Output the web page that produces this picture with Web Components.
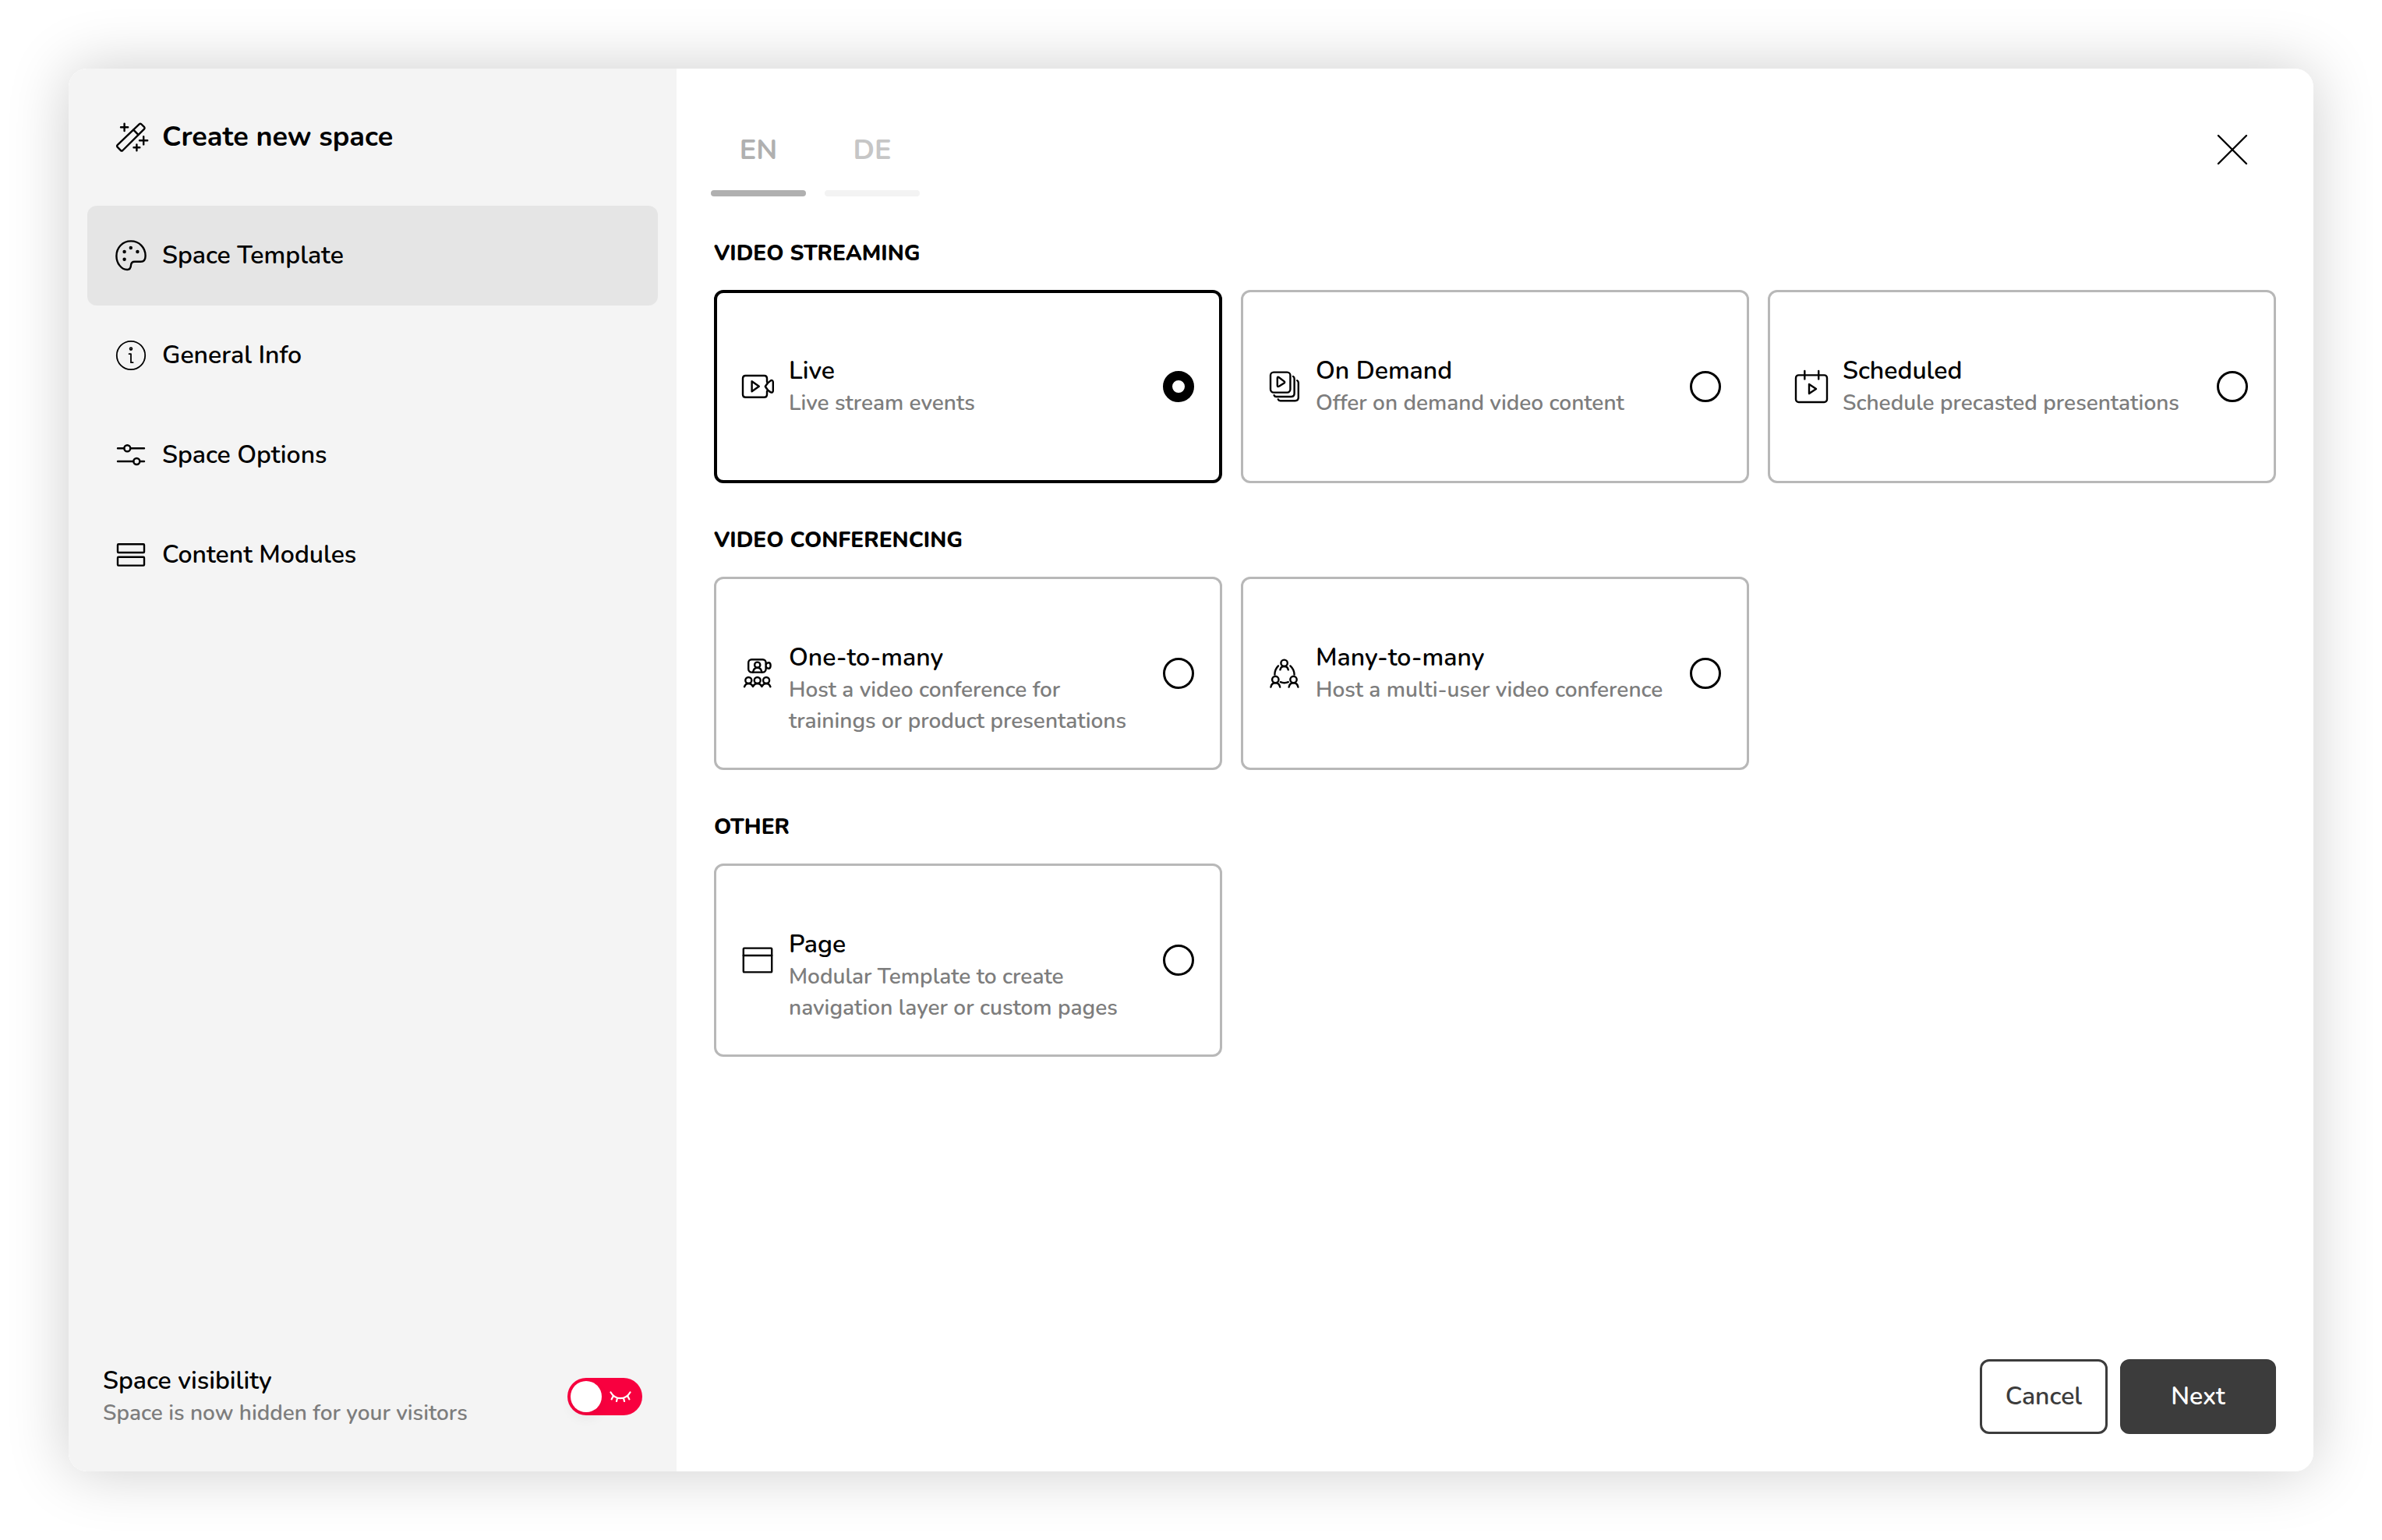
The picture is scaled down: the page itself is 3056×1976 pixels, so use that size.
<!DOCTYPE html>
<html lang="en">
<head>
<meta charset="utf-8">
<title>Create new space</title>
<style>
  html { background: #fff; }
  body { margin: 0; color: #000; font-family: Nunito, "Noto Sans", sans-serif; font-size: 32px; line-height: 40px; }
</style>
</head>
<body>
<space-dialog>
  <dialog-sidebar slot="sidebar" heading="Create new space">
    <nav-item icon="palette" active>Space Template</nav-item>
    <nav-item icon="info">General Info</nav-item>
    <nav-item icon="sliders">Space Options</nav-item>
    <nav-item icon="modules">Content Modules</nav-item>
    <visibility-toggle slot="footer" label="Space visibility" hint="Space is now hidden for your visitors"></visibility-toggle>
  </dialog-sidebar>
  <language-tabs slot="tabs"></language-tabs>
  <template-section heading="VIDEO STREAMING">
    <template-card icon="live" heading="Live" value="live" checked>Live stream events</template-card>
    <template-card icon="demand" heading="On Demand" value="demand">Offer on demand video content</template-card>
    <template-card icon="calendar" heading="Scheduled" value="scheduled">Schedule precasted presentations</template-card>
  </template-section>
  <template-section heading="VIDEO CONFERENCING">
    <template-card icon="onetomany" heading="One-to-many" value="one-to-many">Host a video conference for trainings or product presentations</template-card>
    <template-card icon="manytomany" heading="Many-to-many" value="many-to-many">Host a multi-user video conference</template-card>
  </template-section>
  <template-section heading="OTHER">
    <template-card icon="page" heading="Page" value="page">Modular Template to create navigation layer or custom pages</template-card>
  </template-section>
  <action-button slot="actions">Cancel</action-button>
  <action-button slot="actions" primary>Next</action-button>
</space-dialog>

<script>
const ICONS = {
  wand: '<path d="M30.6 3.4 2.6 30.2Q1.6 31.2 2.4 32.4L7 37.2Q8.2 38 9.4 37L37.2 9.4Q38 8.2 37.2 7.2L33 3Q31.8 2.4 30.6 3.4Z"/><path d="M23.3 10.6 29.4 16.8M11.6 2.6V12M7 7.3H16.2M36.2 19.2V29.4M31 24.3H41.2M27.4 29.4V37.2M23.5 33.3H31.3"/>',
  palette: '<path d="M20 1.4C9 1.4 1.4 10 1.4 20.4 1.4 29.5 7.6 38 15.2 38 18.8 38 19.8 35.6 20 32.4 20.2 29 21.6 27.8 24.8 27.8H32.6C37 27.8 38.6 24.4 38.6 20.2 38.6 9.6 30.6 1.4 20 1.4Z"/><g fill="currentColor" stroke="none"><circle cx="19.8" cy="10" r="2.2"/><circle cx="11.6" cy="15" r="2.2"/><circle cx="28.4" cy="15" r="2.2"/><circle cx="11.6" cy="24.7" r="2.2"/></g>',
  info: '<g stroke-width="1.8"><circle cx="20" cy="20" r="18.2"/><circle cx="20" cy="11.6" r="1.4"/><path d="M17.6 18.2H20V29.2H22.6"/></g>',
  sliders: '<path d="M3 11.3H11.3M19.3 11.3H37M3 28H23.3M31.3 28H37"/><circle cx="15.3" cy="11.3" r="4"/><circle cx="27.3" cy="28" r="4"/>',
  modules: '<rect x="3" y="6.2" width="34" height="10.8" rx="1"/><rect x="3" y="22.8" width="34" height="10.8" rx="1"/>',
  live: '<path d="M32 14V9.5Q32 6 28.5 6H4.5Q1 6 1 9.5V30.3Q1 33.8 4.5 33.8H28.5Q32 33.8 32 30.3V26"/><path d="M12.6 13.2V26.2L21.8 19.7Z"/><path d="M29.8 19.9C31.6 16.6 34.2 13.8 37 12.2 38.6 11.6 39.8 12.6 39.8 14.2V25.4C39.8 27 38.6 28 37 27.4 34.2 26 31.6 23.2 29.8 19.9Z"/>',
  demand: '<rect x="2" y="1.6" width="25.4" height="26" rx="4"/><path d="M10.8 9.2Q10.8 7 12.8 8.2L19.6 13.4Q20.6 14.4 19.6 15.4L12.8 19.8Q10.8 20.8 10.8 18.6ZM31 7Q32.6 7.8 32.6 10V28.8Q32.6 33 28.4 33H9.4Q7.2 33 6.6 31.2M36.2 12.2Q37.8 13 37.8 15.2V34Q37.8 38.2 33.6 38.2H14.6Q12.4 38.2 11.8 36.4"/>',
  calendar: '<rect x="0" y="5.4" width="40" height="34.6" rx="3.6"/><path d="M11.3 0V10.4M29.2 0V10.4M17 17V29L26 23Z"/>',
  onetomany: '<rect x="8.2" y="2.2" width="22.4" height="16.4" rx="4"/><path d="M31 8.2Q32 6.2 34 6.2 36.6 6.2 36.6 10 36.6 13.8 34 13.8 32 13.8 31 11.8"/><circle cx="19.7" cy="9.2" r="3.6"/><path d="M14 18.6C14.6 14.6 17 12.8 19.7 12.8S24.8 14.6 25.4 18.6"/><circle cx="8.3" cy="29" r="4"/><circle cx="19.7" cy="29" r="4"/><circle cx="31.1" cy="29" r="4"/><path d="M3 37.2C4 34.6 6 33 8.3 33S12.8 34.6 14 37C15.2 34.6 17.4 33 19.7 33S24.2 34.6 25.4 37C26.6 34.6 28.8 33 31.1 33S35.4 34.6 36.4 37.2"/>',
  manytomany: '<circle cx="19.6" cy="6.8" r="4.2"/><path d="M14.4 15.4C15 12.6 17 11 19.6 11S24.2 12.6 24.8 15.4M12 10.4Q7.4 15 7.4 21.6M27.4 10.4Q32.4 15 32.6 21.6M14.8 31.2Q19.6 33.2 24.8 31.2"/><circle cx="8.3" cy="28" r="4.2"/><circle cx="31.5" cy="28" r="4.2"/><path d="M2.4 37.6C3 34.4 5.4 32.2 8.3 32.2S13.6 34.4 14.2 37.6M25.6 37.6C26.2 34.4 28.6 32.2 31.5 32.2S36.8 34.4 37.4 37.6"/>',
  page: '<rect x="1.8" y="4.6" width="36.4" height="30.8" rx="1"/><path d="M1.8 14H38.2"/>',
  close: '<path d="M2 2 38 38M38 2 2 38"/>'
};
const icon = name => `<svg class="icon" viewBox="0 0 40 40" width="40" height="40" fill="none" stroke="currentColor" stroke-width="2.4" stroke-linecap="round" stroke-linejoin="round" aria-hidden="true">${ICONS[name]}</svg>`;

class BaseElement extends HTMLElement {
  connectedCallback() {
    if (this.shadowRoot) return;
    this.attachShadow({ mode: 'open' }).innerHTML =
      `<style>*{box-sizing:border-box}.icon{display:block;flex:none;overflow:visible}button,input{font:inherit;color:inherit;margin:0}${this.css()}</style>${this.html()}`;
    this.ready();
  }
  ready() {}
}

customElements.define('space-dialog', class extends BaseElement {
  css() { return `
    :host { display: flex; min-height: 100vh; box-sizing: border-box; padding: 88px; }
    .frame { flex: 1; display: flex; border-radius: 24px; box-shadow: 0 0 80px rgba(0,0,0,.2); }
    .dialog { flex: 1; display: grid; grid-template-columns: 780px minmax(0, 1fr); border-radius: 24px; overflow: hidden; background: #fff; }
    .main { display: flex; flex-direction: column; padding: 48px; }
    header { display: flex; justify-content: space-between; align-items: flex-start; height: 116px; padding-right: 36px; margin-left: -4px; }
    .close { display: flex; align-items: center; height: 112px; padding: 0; border: 0; background: none; cursor: pointer; }
    .content { flex: 1; display: flex; flex-direction: column; gap: 52px; padding-top: 52px; }
    footer { display: flex; justify-content: flex-end; gap: 16px; }`; }
  html() { return `
    <div class="frame"><div class="dialog" role="dialog" aria-label="Create new space">
      <slot name="sidebar"></slot>
      <div class="main">
        <header><slot name="tabs"></slot><button class="close" aria-label="Close">${icon('close')}</button></header>
        <div class="content"><slot></slot></div>
        <footer><slot name="actions"></slot></footer>
      </div>
    </div></div>`; }
  ready() {
    this.addEventListener('template-change', e => {
      this.querySelectorAll('template-card').forEach(c => c.checked = c === e.target);
    });
  }
});

customElements.define('dialog-sidebar', class extends BaseElement {
  css() { return `
    :host { display: flex; flex-direction: column; background: #f4f4f4; padding: 0 24px 48px; }
    h1 { display: flex; align-items: center; gap: 20px; height: 176px; margin: 0; padding: 0 36px; font-size: 36px; line-height: 42px; font-weight: 700; }
    nav { display: flex; flex-direction: column; flex: 1; }`; }
  html() { return `<h1>${icon('wand')}${this.getAttribute('heading')}</h1><nav><slot></slot></nav><slot name="footer"></slot>`; }
});

customElements.define('nav-item', class extends BaseElement {
  css() { return `
    :host { display: block; }
    a { display: flex; align-items: center; gap: 20px; height: 128px; padding: 0 36px; border-radius: 12px; color: inherit; text-decoration: none; font-weight: 600; }
    :host([active]) a { background: #e5e5e5; }`; }
  html() { return `<a href="#"${this.hasAttribute('active') ? ' aria-current="page"' : ''}>${icon(this.getAttribute('icon'))}<span><slot></slot></span></a>`; }
});

customElements.define('visibility-toggle', class extends BaseElement {
  css() { return `
    :host { display: block; padding: 0 20px; }
    label { display: flex; align-items: center; justify-content: space-between; height: 96px; cursor: pointer; }
    .title { display: block; font-weight: 600; }
    .hint { display: block; padding-top: 1px; font-size: 28px; font-weight: 600; color: #7d7d7d; }
    .switch { display: grid; width: 96px; height: 48px; }
    .switch > * { grid-area: 1 / 1; }
    input { appearance: none; width: 96px; height: 48px; border-radius: 24px; background: #f8003f; padding: 4px; cursor: pointer; }
    input::before { content: ""; display: block; width: 40px; height: 40px; border-radius: 50%; background: #fff; box-shadow: 0 8px 16px rgba(0,0,0,.05); }
    input:checked { background: #3c3c3c; }
    input:checked::before { margin-left: 48px; }
    svg { align-self: center; justify-self: end; margin-right: 14px; pointer-events: none; }`; }
  html() { return `<label><span><span class="title">${this.getAttribute('label')}</span><span class="hint">${this.getAttribute('hint')}</span></span>
    <span class="switch"><input type="checkbox" role="switch"><svg viewBox="0 0 28 14" width="28" height="14" fill="none" stroke="#fff" stroke-width="2.2" stroke-linecap="round"><path d="M1.500 1.500Q6 9.200 14 9.200T26.500 1.500M4.600 6.600 2.600 10.400M10 9 9 13M18 9 19 13M23.400 6.600 25.400 10.400"/></svg></span></label>`; }
});

customElements.define('language-tabs', class extends BaseElement {
  css() { return `
    :host { display: flex; gap: 24px; }
    button { width: 122px; height: 116px; padding: 6px 0 0; border: 0; background: none; display: flex; flex-direction: column; align-items: center; font-size: 36px; font-weight: 700; color: #c6c6c6; cursor: pointer; }
    button span { line-height: 102px; }
    button::after { content: ""; flex: none; width: 100%; height: 8px; border-radius: 4px; background: #f3f3f3; }
    [aria-selected=true] { color: #b0b0b0; }
    [aria-selected=true]::after { background: #b0b0b0; }`; }
  html() { return `<button role="tab" aria-selected="true"><span>EN</span></button><button role="tab" aria-selected="false"><span>DE</span></button>`; }
});

customElements.define('template-section', class extends BaseElement {
  css() { return `
    :host { display: block; }
    h2 { margin: 0 0 26px; font-size: 28px; line-height: 42px; font-weight: 800; }
    .grid { display: grid; grid-template-columns: repeat(3, minmax(0, 1fr)); gap: 24px; }`; }
  html() { return `<h2>${this.getAttribute('heading')}</h2><div class="grid"><slot></slot></div>`; }
});

customElements.define('template-card', class extends BaseElement {
  css() { return `
    :host { display: block; }
    label { display: flex; gap: 20px; min-height: 248px; padding: 81px 33px 0; border: 3px solid #b8b8b8; border-radius: 12px; cursor: pointer; }
    label:has(:checked) { border: 4px solid #000; padding: 80px 32px 0; }
    .icon { height: 80px; }
    .text { flex: 1; min-width: 0; }
    .title { display: block; font-weight: 600; }
    .hint { display: block; padding-top: 1px; font-size: 28px; font-weight: 600; color: #7d7d7d; }
    input { appearance: none; flex: none; width: 40px; height: 40px; margin: 20px 0; border: 3px solid #000; border-radius: 50%; background: #fff; cursor: pointer; }
    input:checked { border-width: 12px; }`; }
  html() { return `<label>${icon(this.getAttribute('icon'))}<span class="text"><span class="title">${this.getAttribute('heading')}</span><span class="hint"><slot></slot></span></span><input type="radio" value="${this.getAttribute('value')}"${this.hasAttribute('checked') ? ' checked' : ''}></label>`; }
  ready() {
    this.shadowRoot.querySelector('input').addEventListener('change', () => this.dispatchEvent(new CustomEvent('template-change', { bubbles: true })));
  }
  set checked(v) { this.shadowRoot.querySelector('input').checked = v; }
});

customElements.define('action-button', class extends BaseElement {
  css() { return `
    :host { display: block; }
    button { min-width: 164px; height: 96px; padding: 0 24px; border: 3px solid #3c3c3c; border-radius: 12px; background: #fff; color: #3c3c3c; font-weight: 600; cursor: pointer; }
    :host([primary]) button { min-width: 200px; background: #3c3c3c; color: #fff; }`; }
  html() { return `<button type="button"><slot></slot></button>`; }
});
</script>
</body>
</html>
